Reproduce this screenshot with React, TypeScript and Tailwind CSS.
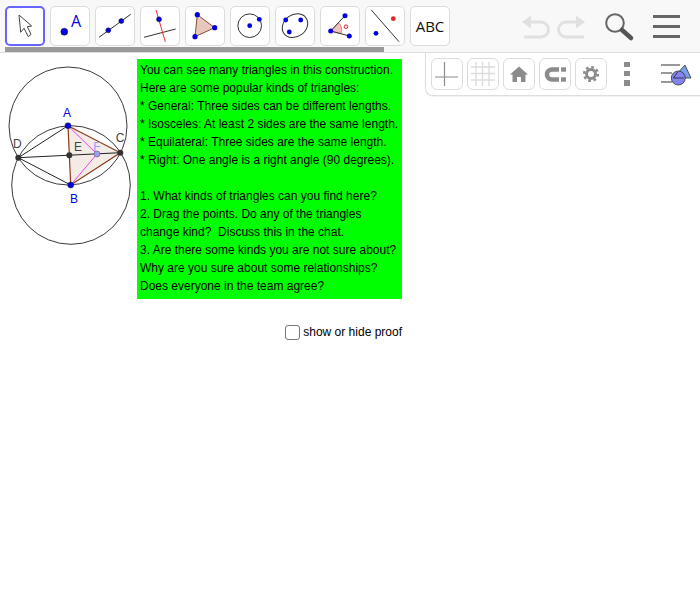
const lines = [
  "You can see many triangles in this construction.",
  "Here are some popular kinds of triangles:",
  "* General: Three sides can be different lengths.",
  "* Isosceles: At least 2 sides are the same length.",
  "* Equilateral: Three sides are the same length.",
  "* Right: One angle is a right angle (90 degrees).",
  " ",
  "1. What kinds of triangles can you find here?",
  "2. Drag the points. Do any of the triangles",
  "change kind?  Discuss this in the chat.",
  "3. Are there some kinds you are not sure about?",
  "Why are you sure about some relationships?",
  "Does everyone in the team agree?",
]

const BLUE = "#0000e0"
const INK = "#333333"

const toolIcons = [
  <path d="M14 9 L15.7 26.3 L19 22.3 L23.3 30.7 L26 28.3 L22.3 20.7 L26.7 20 Z" fill="#fff" stroke="#444" strokeWidth="1" strokeLinejoin="round" />,
  <>
    <circle cx="14.3" cy="25.7" r="3.5" fill={BLUE} stroke="#222" strokeWidth="0.5" />
    <text x="26" y="20.5" textAnchor="middle" fontSize="16" fontFamily="'Open Sans', sans-serif" fill={BLUE}>A</text>
  </>,
  <>
    <line x1="4" y1="31.3" x2="35.7" y2="8.3" stroke={INK} />
    <circle cx="13.3" cy="24.3" r="2.5" fill={BLUE} stroke="#222" strokeWidth="0.5" />
    <circle cx="26.3" cy="15" r="2.5" fill={BLUE} stroke="#222" strokeWidth="0.5" />
  </>,
  <>
    <line x1="4" y1="31.3" x2="35.7" y2="23" stroke={INK} />
    <line x1="16" y1="4" x2="25.3" y2="35.7" stroke="#e8303a" />
    <circle cx="19" cy="13.3" r="2.5" fill={BLUE} stroke="#222" strokeWidth="0.5" />
  </>,
  <>
    <polygon points="12.3,8.7 29.7,21.7 10,30.7" fill="#e8c8bc" stroke="#8a4a30" />
    <circle cx="12.3" cy="8.7" r="2.6" fill={BLUE} />
    <circle cx="29.7" cy="21.7" r="2.6" fill={BLUE} />
    <circle cx="10" cy="30.7" r="2.6" fill={BLUE} />
  </>,
  <>
    <circle cx="19.7" cy="19.7" r="11.8" fill="none" stroke={INK} />
    <circle cx="19.7" cy="19.7" r="2.4" fill={BLUE} />
    <circle cx="29.3" cy="13.3" r="2.4" fill={BLUE} />
  </>,
  <>
    <ellipse cx="20" cy="19.7" rx="13.5" ry="11" transform="rotate(-35 20 19.7)" fill="none" stroke={INK} />
    <circle cx="10.7" cy="14" r="2.4" fill={BLUE} />
    <circle cx="25.7" cy="14" r="2.4" fill={BLUE} />
    <circle cx="14.3" cy="26" r="2.4" fill={BLUE} />
  </>,
  <>
    <path d="M10.7 25 L18.5 16.5 A11 11 0 0 1 21 27.7 Z" fill="#f4c4bc" stroke="#e06a5a" strokeWidth="0.8" />
    <line x1="10.7" y1="25" x2="25" y2="9.7" stroke={INK} />
    <line x1="10.7" y1="25" x2="29.3" y2="30" stroke={INK} />
    <circle cx="10.7" cy="25" r="2.5" fill={BLUE} />
    <circle cx="25" cy="9.7" r="2.5" fill={BLUE} />
    <circle cx="29.3" cy="30" r="2.5" fill={BLUE} />
    <circle cx="26" cy="20.7" r="1.8" fill="none" stroke="#e02020" />
  </>,
  <>
    <line x1="6.3" y1="4" x2="34" y2="35.7" stroke={INK} />
    <circle cx="28.3" cy="12.7" r="2.4" fill="#e02828" />
    <circle cx="11" cy="27.3" r="2.4" fill={BLUE} />
  </>,
]

function ToolButton({ active, children }: { active?: boolean; children: React.ReactNode }) {
  return (
    <div
      className={
        active
          ? "w-[40px] h-[40px] rounded-[5px] bg-white border-2 border-[#6666ff] flex items-center justify-center"
          : "w-[40px] h-[40px] rounded-[5px] bg-white border border-[#dcdcdc] flex items-center justify-center"
      }
    >
      {children}
    </div>
  )
}

function PanelButton({ children }: { children: React.ReactNode }) {
  return (
    <div className="w-[32px] h-[32px] shrink-0 rounded-[6px] border border-[#dcdcdc] bg-white flex items-center justify-center">
      <svg className="shrink-0" width="30" height="30" viewBox="0 0 30 30">{children}</svg>
    </div>
  )
}

function Construction() {
  return (
    <svg className="shrink-0" width="137" height="200" viewBox="0 53 137 200">
      <circle cx="68" cy="126" r="59" fill="none" stroke="#222" strokeWidth="0.9" />
      <circle cx="71" cy="185" r="59.3" fill="none" stroke="#222" strokeWidth="0.9" />
      <polygon points="68,125.7 120.3,152.7 70.7,185" fill="#f3ebe6" />
      <line x1="18.3" y1="157.7" x2="68" y2="125.7" stroke="#222" />
      <line x1="18.3" y1="157.7" x2="70.7" y2="185" stroke="#222" />
      <line x1="18.3" y1="157.7" x2="120.3" y2="152.7" stroke="#222" />
      <line x1="68" y1="125.7" x2="97" y2="154" stroke="#f040f0" />
      <line x1="70.7" y1="185" x2="97" y2="154" stroke="#f040f0" />
      <polygon points="68,125.7 120.3,152.7 70.7,185" fill="none" stroke="#8b3a1a" strokeWidth="1.2" />
      <circle cx="18.3" cy="157.7" r="3" fill={INK} />
      <circle cx="120.3" cy="152.7" r="3" fill={INK} />
      <circle cx="69.3" cy="155.3" r="3" fill={INK} />
      <circle cx="97" cy="154" r="3" fill="#9c9cf0" stroke="#555" strokeWidth="0.5" />
      <circle cx="68" cy="125.7" r="3" fill={BLUE} stroke="#222" strokeWidth="0.5" />
      <circle cx="70.7" cy="185" r="3" fill={BLUE} stroke="#222" strokeWidth="0.5" />
      <g fontSize="12" fontFamily="'Liberation Sans', sans-serif" textAnchor="middle">
        <text x="67" y="117" fill={BLUE}>A</text>
        <text x="74" y="203" fill={BLUE}>B</text>
        <text x="120" y="142" fill="#444">C</text>
        <text x="17.3" y="147.5" fill="#444">D</text>
        <text x="78" y="150.5" fill="#444">E</text>
        <text x="97" y="151" fill="#9c9cf0">F</text>
      </g>
    </svg>
  )
}

export default function App() {
  return (
    <div className="relative w-[700px] h-[600px] overflow-hidden bg-white font-['Liberation_Sans',Arial,sans-serif] text-black">
      <div className="relative flex h-[53px] items-start bg-[#f8f8f8] border-b border-[#dedede] pl-[5px] pt-[6px]">
        <div className="flex gap-[5px]">
          {toolIcons.map((icon, i) => (
            <ToolButton key={i} active={i === 0}>
              <svg className="shrink-0" width="40" height="40" viewBox="0 0 40 40">{icon}</svg>
            </ToolButton>
          ))}
          <ToolButton>
            <span className="font-['Open_Sans',sans-serif] text-[15px] text-[#111]">ABC</span>
          </ToolButton>
        </div>
        <svg className="ml-[71px] -mt-[6px] shrink-0" width="170" height="46" viewBox="521 0 170 46">
          <g fill="none" stroke="#e0e0e0" strokeWidth="3">
            <path d="M528 22 H541 A7.5 7.5 0 0 1 541 37 H524" />
            <path d="M579 22 H566 A7.5 7.5 0 0 0 566 37 H584" />
          </g>
          <polygon points="522,22 531,15.5 531,28.5" fill="#e0e0e0" />
          <polygon points="585,22 576,15.5 576,28.5" fill="#e0e0e0" />
          <circle cx="615" cy="23" r="8.8" fill="none" stroke="#666" strokeWidth="2" />
          <line x1="622" y1="30" x2="631" y2="38" stroke="#555" strokeWidth="4.5" strokeLinecap="round" />
          <g fill="#666">
            <rect x="653" y="15" width="27" height="3" />
            <rect x="653" y="25" width="27" height="3" />
            <rect x="653" y="35" width="27" height="3" />
          </g>
        </svg>
        <div className="absolute left-[5px] top-[47px] w-[379px] h-[5px] bg-[#9a9a9a]" />
      </div>

      <div className="absolute left-[425px] top-[53px] flex w-[275px] h-[43px] items-start gap-[4px] bg-white border-l border-b border-[#dedede] rounded-bl-lg pl-[5px] pt-[5px] shadow-[0_1px_1px_rgba(0,0,0,0.05)]">
        <PanelButton>
          <path d="M12.5 3 V27 M3 18 H26" stroke="#8c8c8c" strokeWidth="1.2" />
        </PanelButton>
        <PanelButton>
          <path d="M8 3 V27 M14.5 3 V27 M21 3 V27 M3 8 H27 M3 14.5 H27 M3 21 H27" stroke="#dddddd" strokeWidth="1.4" />
        </PanelButton>
        <PanelButton>
          <path d="M15 7.5 L24 15.5 H21.5 V23 H17 V18 H13 V23 H8.5 V15.5 H6 Z" fill="#8c8c8c" />
        </PanelButton>
        <PanelButton>
          <path d="M19 10.5 H12 A5 5 0 0 0 12 20.5 H19" fill="none" stroke="#8c8c8c" strokeWidth="4.5" />
          <rect x="21" y="8.3" width="5" height="4.4" fill="#8c8c8c" />
          <rect x="21" y="18.3" width="5" height="4.4" fill="#8c8c8c" />
        </PanelButton>
        <PanelButton>
          <circle cx="15" cy="15" r="4.5" fill="none" stroke="#8c8c8c" strokeWidth="3" />
          <circle cx="15" cy="15" r="6.8" fill="none" stroke="#8c8c8c" strokeWidth="2.6" strokeDasharray="2.67 2.67" />
        </PanelButton>
        <svg className="ml-[8px] shrink-0" width="80" height="40" viewBox="619 58 80 40">
          <g fill="#8c8c8c">
            <rect x="624" y="62" width="6" height="5" />
            <rect x="624" y="71" width="6" height="5" />
            <rect x="624" y="80" width="6" height="6" />
          </g>
          <path d="M661 65 H680 M661 73 H672 M661 82 H672" stroke="#777" strokeWidth="1.6" />
          <polygon points="685,65 673,78 691,78" fill="#7a9ee8" stroke="#333" strokeWidth="0.8" />
          <circle cx="678.3" cy="78" r="7" fill="#8484f0" stroke="#333" strokeWidth="0.8" />
          <path d="M678 71.5 L673.5 78 H684" fill="none" stroke="#222" strokeWidth="0.8" />
        </svg>
      </div>

      <div className="flex">
        <Construction />
        <div className="mt-[6px] flex w-[265px] flex-col">
          <div className="h-[240px] bg-[#00ff00] pl-[3px] pt-[2px] text-[12px] leading-[18px]">
            {lines.map((line, i) => (
              <div key={i} className="whitespace-pre">{line}</div>
            ))}
          </div>
          <div className="mt-[26px] flex items-center justify-end gap-[3px]">
            <div className="w-[15px] h-[15px] rounded-[3px] border border-[#777] bg-white" />
            <span className="text-[12px] leading-[15px]">show or hide proof</span>
          </div>
        </div>
      </div>
    </div>
  )
}
